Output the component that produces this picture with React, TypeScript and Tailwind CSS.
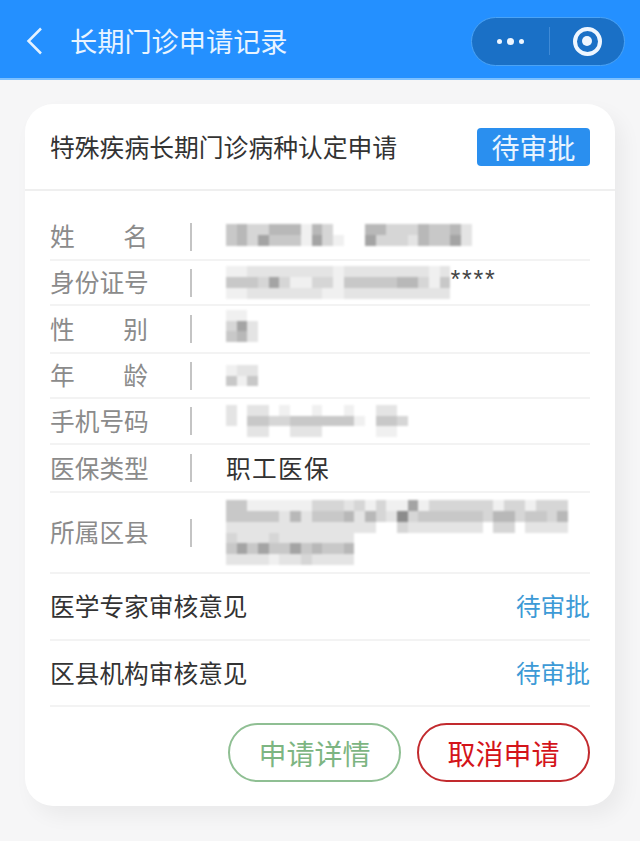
const CJK = "font-['Noto_Sans_CJK_SC','Noto_Sans',sans-serif]";

const shades: Record<string, string> = {
  ".": "transparent",
  a: "#f0f0f0",
  b: "#e4e4e4",
  c: "#d6d6d6",
  d: "#c8c8c8",
  e: "#b8b8b8",
  f: "#a4a4a4",
  g: "#8c8c8c",
};

function Mosaic({ rows, cell = 10.7 }: { rows: string[]; cell?: number }) {
  return (
    <div className="flex flex-col blur-[1.2px]">
      {rows.map((row, i) => (
        <div key={i} className="flex">
          {row.split("").map((c, j) => (
            <span key={j} style={{ width: cell, height: cell, backgroundColor: shades[c] }} />
          ))}
        </div>
      ))}
    </div>
  );
}

function InfoRow({
  label,
  children,
  h,
  border = true,
}: {
  label: string;
  children: React.ReactNode;
  h: string;
  border?: boolean;
}) {
  return (
    <div className={`flex items-center ${h} ${border ? "border-b-2 border-[#f3f3f3]" : ""}`}>
      <div className="flex w-[98px] justify-between pb-[2px] text-[24.7px] leading-none text-[#8b8b8b]">
        {label.split("").map((ch, i) => (
          <span key={i}>{ch}</span>
        ))}
      </div>
      <div className="ml-[42px] h-[28px] w-[2px] bg-[#c4c4c4]" />
      <div className="ml-[34px] flex min-w-0 flex-1 items-center">{children}</div>
    </div>
  );
}

function ReviewRow({ label, h }: { label: string; h: string }) {
  return (
    <div className={`flex items-center justify-between border-b-2 border-[#f3f3f3] pb-[2px] ${h}`}>
      <span className="text-[24.7px] leading-none text-[#333333]">{label}</span>
      <span className="text-[24.7px] leading-none text-[#3d9ad6]">待审批</span>
    </div>
  );
}

export default function App() {
  return (
    <div className={`${CJK} flex h-[841px] w-[640px] flex-col overflow-hidden bg-[#f6f6f7]`}>
      <header className="flex h-[80px] shrink-0 items-center border-b-2 border-[#7cc0ff] bg-[#2490ff] pl-[25px] pr-[15px] pt-[4px]">
        <svg width="20" height="30" viewBox="0 0 20 30" fill="none" className="shrink-0">
          <path d="M16 2.5 L3.5 15 L16 27.5" stroke="#e4f2ff" strokeWidth="2.5" />
        </svg>
        <h1 className="ml-[25px] text-[27.2px] leading-none font-normal text-[#e8f4ff]">长期门诊申请记录</h1>
        <div className="ml-auto flex h-[49px] w-[154px] items-center rounded-full border border-[#4ba3f5] bg-[#1a70c6]">
          <div className="flex w-[77px] items-center justify-center gap-[5px]">
            <span className="h-[5px] w-[5px] rounded-full bg-[#eef6ff]" />
            <span className="h-[7px] w-[7px] rounded-full bg-[#eef6ff]" />
            <span className="h-[5px] w-[5px] rounded-full bg-[#eef6ff]" />
          </div>
          <div className="h-[28px] w-px bg-[#3f8ad6]" />
          <div className="flex flex-1 items-center justify-center">
            <div className="flex h-[29px] w-[29px] items-center justify-center rounded-full border-[4px] border-[#eef6ff]">
              <span className="h-[10px] w-[10px] rounded-full bg-[#eef6ff]" />
            </div>
          </div>
        </div>
      </header>

      <main className="px-[25px] pt-[24px]">
        <section className="h-[702px] rounded-[28px] bg-white shadow-[8px_10px_20px_rgba(0,0,0,0.05)]">
          <div className="flex h-[87px] items-center justify-between border-b-2 border-[#efefef] pl-[25px] pr-[25px]">
            <h2 className="text-[24.8px] leading-none font-normal text-[#333333]">特殊疾病长期门诊病种认定申请</h2>
            <span className="flex h-[38px] w-[113px] items-center justify-center rounded-[4px] bg-[#2a8fef] text-[28px] leading-none text-[#e8f4ff]">
              待审批
            </span>
          </div>

          <div className="pl-[25px] pr-[25px]">
            <InfoRow label="姓名" h="h-[70px] pt-[23px]">
              <div className="-mt-[3px]">
                <Mosaic
                  rows={[
                    "deccee" + "ea" + "ec" + "..." + "eecccedde" + "b",
                    "decfdd" + "da" + "fc" + "a.." + "fcccbeddf" + "b",
                  ]}
                />
              </div>
            </InfoRow>
            <InfoRow label="身份证号" h="h-[45px]">
              <div className="flex items-center">
                <Mosaic
                  rows={[
                    "aabbbbbbbbabbbbbbbbab",
                    "dddcfcaaccadddddeecad",
                    "aabbbbbbbaabbbbbbbbbb",
                  ]}
                />
                <span className="-mt-[6px] font-['Liberation_Sans',sans-serif] text-[25px] leading-none tracking-[1.8px] text-[#444444]">****</span>
              </div>
            </InfoRow>
            <InfoRow label="性别" h="h-[48px]">
              <div className="-mt-[6px]">
                <Mosaic rows={["aa.", "cfb", "deb"]} />
              </div>
            </InfoRow>
            <InfoRow label="年龄" h="h-[45px]">
              <Mosaic rows={["abb", "dad"]} />
            </InfoRow>
            <InfoRow label="手机号码" h="h-[46px]">
              <Mosaic
                rows={[
                  "b.bb.a..a..a..bb.",
                  "b.ddccdddddda.ddc",
                  "..bb..bbb.....aa.",
                ]}
              />
            </InfoRow>
            <InfoRow label="医保类型" h="h-[48px]">
              <span className="pb-[2px] text-[24.7px] leading-none tracking-[1.3px] text-[#333333]">职工医保</span>
            </InfoRow>
            <InfoRow label="所属区县" h="h-[81px]">
              <Mosaic
                rows={[
                  "ddaaaaaacccbcacaafaccccccacca" + "ccc",
                  "dddddbebdddebecbgcddddddceecddce",
                  "bbbbbbbbbbbbbb..cb" + "bbbbbb.cc.bbbb",
                  "cbbbcbbbbbbb",
                  "dfdfddfdedde",
                  "bbbbabbcbbbb",
                ]}
              />
            </InfoRow>
            <ReviewRow label="医学专家审核意见" h="h-[67px]" />
            <ReviewRow label="区县机构审核意见" h="h-[66px]" />
            <div className="flex justify-end gap-[16px] pt-[16px]">
              <button className="flex h-[59px] w-[173px] items-center justify-center rounded-full border-2 border-[#8fbf93] bg-white text-[28px] leading-none text-[#7db582]">
                申请详情
              </button>
              <button className="flex h-[59px] w-[173px] items-center justify-center rounded-full border-2 border-[#c22a2e] bg-white text-[28px] leading-none text-[#d4141a]">
                取消申请
              </button>
            </div>
          </div>
        </section>
      </main>
    </div>
  );
}
